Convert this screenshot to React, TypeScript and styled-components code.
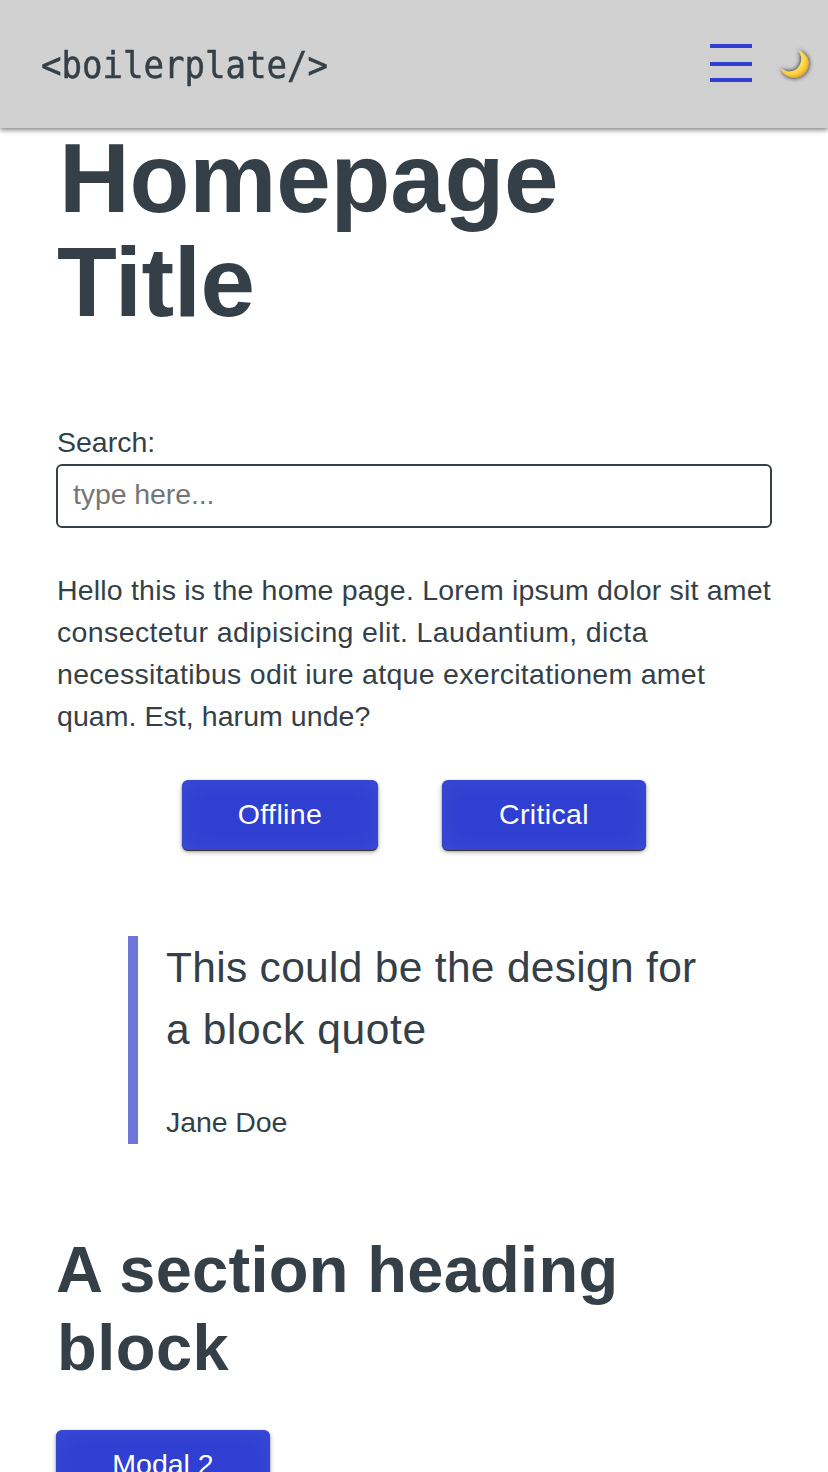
import React from "react";
import styled, { createGlobalStyle } from "styled-components";

const ink = "#353f48";
const blue = "#2f3fd1";

const GlobalStyle = createGlobalStyle`
  *, *::before, *::after { box-sizing: border-box; }
  html, body { margin: 0; height: 100%; overflow: hidden; background: #fff; }
  body {
    color: ${ink};
    font: 28.5px/42px "Liberation Sans", Arial, sans-serif;
  }
  h1, h2, p, blockquote { margin: 0; font-weight: inherit; }
`;

const Page = styled.div`
  height: 1472px;
  overflow: hidden;
`;

const Header = styled.header`
  position: relative;
  z-index: 1;
  display: flex;
  align-items: center;
  height: 128px;
  padding: 0 16px 0 41px;
  background: #d1d1d1;
  box-shadow: 0 2px 5px rgba(0, 0, 0, 0.5);
`;

const Logo = styled.a`
  flex: 1;
  margin-top: 2px;
  font: 38px/48px "DejaVu Sans Mono", monospace;
  white-space: nowrap;
  -webkit-text-stroke: 0.5px ${ink};
  transform: scaleX(0.896);
  transform-origin: left;
`;

const MenuButton = styled.button`
  display: flex;
  width: 42px;
  padding: 0;
  margin: 0 27px 2px 0;
  border: 0;
  background: none;
`;

const ThemeButton = styled.button`
  display: flex;
  padding: 0;
  border: 0;
  background: none;
`;

const Main = styled.main`
  padding: 0 56px;
`;

const Title = styled.h1`
  margin-top: -2px;
  font-size: 98px;
  line-height: 104px;
  font-weight: 700;
`;

const Field = styled.label`
  display: flex;
  flex-direction: column;
  margin-top: 87px;
`;

const FieldName = styled.span`
  padding: 0 0 1px 1px;
`;

const Input = styled.input`
  height: 64px;
  padding: 0 15px 4px;
  border: 2px solid ${ink};
  border-radius: 6px;
  outline: 0;
  background: #fff;
  color: ${ink};
  font: inherit;
  letter-spacing: -0.1px;
  &::placeholder { color: #757575; opacity: 1; }
`;

const Copy = styled.p`
  margin-top: 41px;
`;

const Line = styled.span<{ $spacing?: number; $indent?: number }>`
  display: block;
  padding-left: ${(p) => p.$indent ?? 0}px;
  white-space: nowrap;
  letter-spacing: ${(p) => p.$spacing ?? 0}px;
`;

const Actions = styled.div`
  display: flex;
  justify-content: center;
  gap: 64px;
  margin-top: 43px;
`;

const Button = styled.button<{ $width: number; $spacing?: number }>`
  width: ${(p) => p.$width}px;
  height: 70px;
  padding: 0 0 2px;
  border: 0;
  border-radius: 6px;
  background: ${blue};
  color: #fff;
  font: inherit;
  letter-spacing: ${(p) => p.$spacing ?? 0}px;
  box-shadow: inset 0 0 26px rgba(255, 255, 255, 0.07), 0 1px 1px rgba(0, 0, 0, 0.8),
    0 2px 5px rgba(0, 0, 0, 0.35);
`;

const Quote = styled.blockquote`
  margin: 86px 72px 0;
  padding-left: 28px;
  height: 208px;
  border-left: 10px solid #6e76d8;
`;

const QuoteText = styled.p`
  padding-top: 1px;
  font-size: 42.5px;
  line-height: 62px;
`;

const Author = styled.p`
  margin-top: 40px;
  letter-spacing: -0.1px;
`;

const Heading = styled.h2`
  margin: 87px 0 43px;
  font-size: 65px;
  line-height: 78px;
  font-weight: 700;
`;

export default function App() {
  return (
    <Page>
      <GlobalStyle />
      <Header>
        <Logo>{"<boilerplate/>"}</Logo>
        <MenuButton aria-label="Menu">
          <svg width="42" height="38" viewBox="0 0 42 38" fill={blue}>
            <path d="M0 0h42v4H0zM0 18h42v4H0zM0 34h42v4H0z" />
          </svg>
        </MenuButton>
        <ThemeButton aria-label="Dark mode">
          <svg width="33" height="36" viewBox="0 0 33 36" overflow="visible">
            <defs>
              <radialGradient id="moon" gradientUnits="userSpaceOnUse" cx="13" cy="14" r="18.5">
                <stop offset="0.5" stopColor="#ffe45e" />
                <stop offset="0.78" stopColor="#fbd03c" />
                <stop offset="1" stopColor="#e2a92a" />
              </radialGradient>
              <filter id="moonShadow" x="-30%" y="-30%" width="160%" height="160%">
                <feDropShadow dx="0" dy="0" stdDeviation="2.4" floodColor="#000" floodOpacity="1" />
              </filter>
            </defs>
            <path
              d="M20.5 4.5C27 7.5 30.3 12 30.3 17.5C30.3 25.5 24 31.7 16 31.7C10 31.7 5 28.5 2.7 22.3C8 27 15 26.5 19.3 22.3C23.5 18 24.5 11 20.5 4.5Z"
              fill="url(#moon)"
              filter="url(#moonShadow)"
              transform="translate(-0.7 0)"
            />
          </svg>
        </ThemeButton>
      </Header>
      <Main>
        <Title>
          <Line $indent={3} $spacing={-0.2}>Homepage</Line>
          <Line $indent={1} $spacing={-0.4}>Title</Line>
        </Title>
        <Field>
          <FieldName>Search:</FieldName>
          <Input placeholder="type here..." />
        </Field>
        <Copy>
          <Line $indent={1} $spacing={0.19}>Hello this is the home page. Lorem ipsum dolor sit amet</Line>
          <Line $indent={1} $spacing={0.37}>consectetur adipisicing elit. Laudantium, dicta</Line>
          <Line $indent={1} $spacing={0.29}>necessitatibus odit iure atque exercitationem amet</Line>
          <Line $indent={1} $spacing={0.06}>quam. Est, harum unde?</Line>
        </Copy>
        <Actions>
          <Button $width={196} $spacing={0.35}>Offline</Button>
          <Button $width={204} $spacing={0.35}>Critical</Button>
        </Actions>
        <Quote>
          <QuoteText>
            <Line $spacing={0.3}>This could be the design for</Line>
            <Line $spacing={0.6}>a block quote</Line>
          </QuoteText>
          <Author>Jane Doe</Author>
        </Quote>
        <Heading>
          <Line $spacing={0.3}>A section heading</Line>
          <Line $indent={1} $spacing={0.5}>block</Line>
        </Heading>
        <Button $width={214}>Modal 2</Button>
      </Main>
    </Page>
  );
}
